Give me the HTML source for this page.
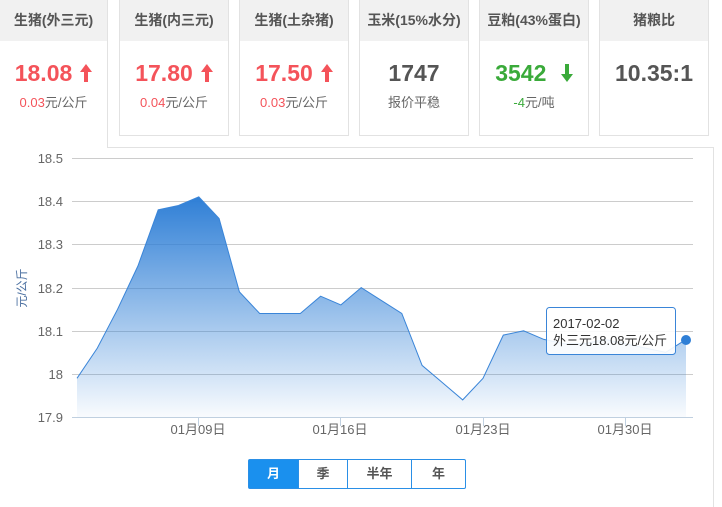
<!DOCTYPE html>
<html><head><meta charset="utf-8"><style>
body{margin:0;width:722px;height:499px;background:#fff;font-family:"Liberation Sans","Noto Sans CJK SC",sans-serif;position:relative;overflow:hidden}
.tab{position:absolute;top:0;width:108px;height:136px;box-sizing:border-box;border:1px solid #e2e2e2;border-top:none;background:#fff;text-align:center}
.tab .h{height:41px;background:#f1f1f1;line-height:41px;font-size:14px;font-weight:bold;color:#555}
.tab .v{margin-top:17px;font-size:23px;font-weight:bold;line-height:30px}
.tab .v svg{vertical-align:-1px;margin-left:8px}
.tab .s{font-size:13px;color:#666;margin-top:4px}
.r{color:#f4535a}.g{color:#3aaa3a}.k{color:#555}
.panel{position:absolute;left:108px;top:147px;width:606px;height:360px;border-top:1px solid #e2e2e2;border-right:1px solid #e2e2e2;box-sizing:border-box}
.btns{position:absolute;left:248px;top:459px;display:flex;border:1px solid #2a8fe6;border-radius:2px;height:30px;box-sizing:border-box}
.btns div{line-height:28px;text-align:center;font-size:13px;font-weight:bold;color:#555;border-left:1px solid #2a8fe6}
</style></head><body>
<div class="panel"></div>
<div class="tab" style="left:0;border:none;border-right:1px solid #e2e2e2;height:148px"><div class="h">生猪(外三元)</div><div class="v r">18.08<svg width="12" height="18" viewBox="0 0 12 18"><path d="M6 0 L12 8 L8 8 L8 18 L4 18 L4 8 L0 8Z" fill="#f4535a"/></svg></div><div class="s"><span class="r">0.03</span>元/公斤</div></div>
<div class="tab" style="left:119px;width:110px"><div class="h">生猪(内三元)</div><div class="v r">17.80<svg width="12" height="18" viewBox="0 0 12 18"><path d="M6 0 L12 8 L8 8 L8 18 L4 18 L4 8 L0 8Z" fill="#f4535a"/></svg></div><div class="s"><span class="r">0.04</span>元/公斤</div></div>
<div class="tab" style="left:239px;width:110px"><div class="h">生猪(土杂猪)</div><div class="v r">17.50<svg width="12" height="18" viewBox="0 0 12 18"><path d="M6 0 L12 8 L8 8 L8 18 L4 18 L4 8 L0 8Z" fill="#f4535a"/></svg></div><div class="s"><span class="r">0.03</span>元/公斤</div></div>
<div class="tab" style="left:359px;width:110px"><div class="h">玉米(15%水分)</div><div class="v k">1747</div><div class="s">报价平稳</div></div>
<div class="tab" style="left:479px;width:110px"><div class="h">豆粕(43%蛋白)</div><div class="v g">3542 <svg width="12" height="18" viewBox="0 0 12 18" style="margin-left:8px"><path d="M6 18 L12 10 L8 10 L8 0 L4 0 L4 10 L0 10Z" fill="#3aaa3a"/></svg></div><div class="s"><span class="g">-4</span>元/吨</div></div>
<div class="tab" style="left:599px;width:110px"><div class="h">猪粮比</div><div class="v k">10.35:1</div></div>
<svg style="position:absolute;left:0;top:0" width="722" height="499">
<defs><linearGradient id="gr" x1="0" y1="0" x2="0" y2="1"><stop offset="0" stop-color="#2f7fd6"/><stop offset="1" stop-color="#2f7fd6" stop-opacity="0.03"/></linearGradient></defs>
<g stroke="#cccccc" stroke-width="1">
<line x1="72" y1="158.5" x2="693" y2="158.5"/><line x1="72" y1="201.5" x2="693" y2="201.5"/><line x1="72" y1="244.5" x2="693" y2="244.5"/><line x1="72" y1="288.5" x2="693" y2="288.5"/><line x1="72" y1="331.5" x2="693" y2="331.5"/><line x1="72" y1="374.5" x2="693" y2="374.5"/></g>
<path d="M77,378.3 L97.3,348.1 117.6,309.2 137.9,266 158.2,209.8 178.5,205.5 198.8,196.9 219.1,218.5 239.4,291.9 259.7,313.5 280,313.5 300.3,313.5 320.6,296.2 340.9,304.9 361.2,287.6 381.5,300.6 401.8,313.5 422.1,365.4 442.4,382.6 462.7,399.9 483,378.3 503.3,335.1 523.6,330.8 543.9,339.4 564.2,343.8 584.5,343.8 604.8,339.4 625.1,343.8 645.4,348.1 665.7,352.4 686,339.4 L686,417 L77,417Z" fill="url(#gr)"/>
<path d="M77,378.3 L97.3,348.1 117.6,309.2 137.9,266 158.2,209.8 178.5,205.5 198.8,196.9 219.1,218.5 239.4,291.9 259.7,313.5 280,313.5 300.3,313.5 320.6,296.2 340.9,304.9 361.2,287.6 381.5,300.6 401.8,313.5 422.1,365.4 442.4,382.6 462.7,399.9 483,378.3 503.3,335.1 523.6,330.8 543.9,339.4 564.2,343.8 584.5,343.8 604.8,339.4 625.1,343.8 645.4,348.1 665.7,352.4 686,339.4" fill="none" stroke="#3a85d8" stroke-width="1"/>
<line x1="72" y1="417.5" x2="693" y2="417.5" stroke="#c0d0e0"/>
<g stroke="#c0d0e0"><line x1="198.5" y1="417" x2="198.5" y2="426"/><line x1="340.5" y1="417" x2="340.5" y2="426"/><line x1="483.5" y1="417" x2="483.5" y2="426"/><line x1="625.5" y1="417" x2="625.5" y2="426"/></g>
<g font-size="13" fill="#666" text-anchor="end" font-family="Liberation Sans,sans-serif">
<text x="63" y="163">18.5</text><text x="63" y="206">18.4</text><text x="63" y="249">18.3</text><text x="63" y="293">18.2</text><text x="63" y="336">18.1</text><text x="63" y="379">18</text><text x="63" y="422">17.9</text></g>
<g font-size="13" fill="#666" text-anchor="middle"><text x="198" y="434">01月09日</text><text x="340" y="434">01月16日</text><text x="483" y="434">01月23日</text><text x="625" y="434">01月30日</text></g>
<text transform="translate(26,288) rotate(-90)" font-size="12" fill="#4a6fa0" text-anchor="middle">元/公斤</text>
<rect x="546.5" y="307.5" width="129" height="47" rx="3" fill="#fff" fill-opacity="0.9" stroke="#3a85d8"/>
<text x="553" y="328" font-size="13" fill="#333">2017-02-02</text>
<text x="553" y="345" font-size="13" fill="#333">外三元18.08元/公斤</text>
<circle cx="686" cy="340" r="5" fill="#2f7fd6"/>
</svg>
<div class="btns"><div style="width:49px;background:#1a90ee;color:#fff;border:none">月</div><div style="width:48px">季</div><div style="width:63px">半年</div><div style="width:53px">年</div></div>
</body></html>
